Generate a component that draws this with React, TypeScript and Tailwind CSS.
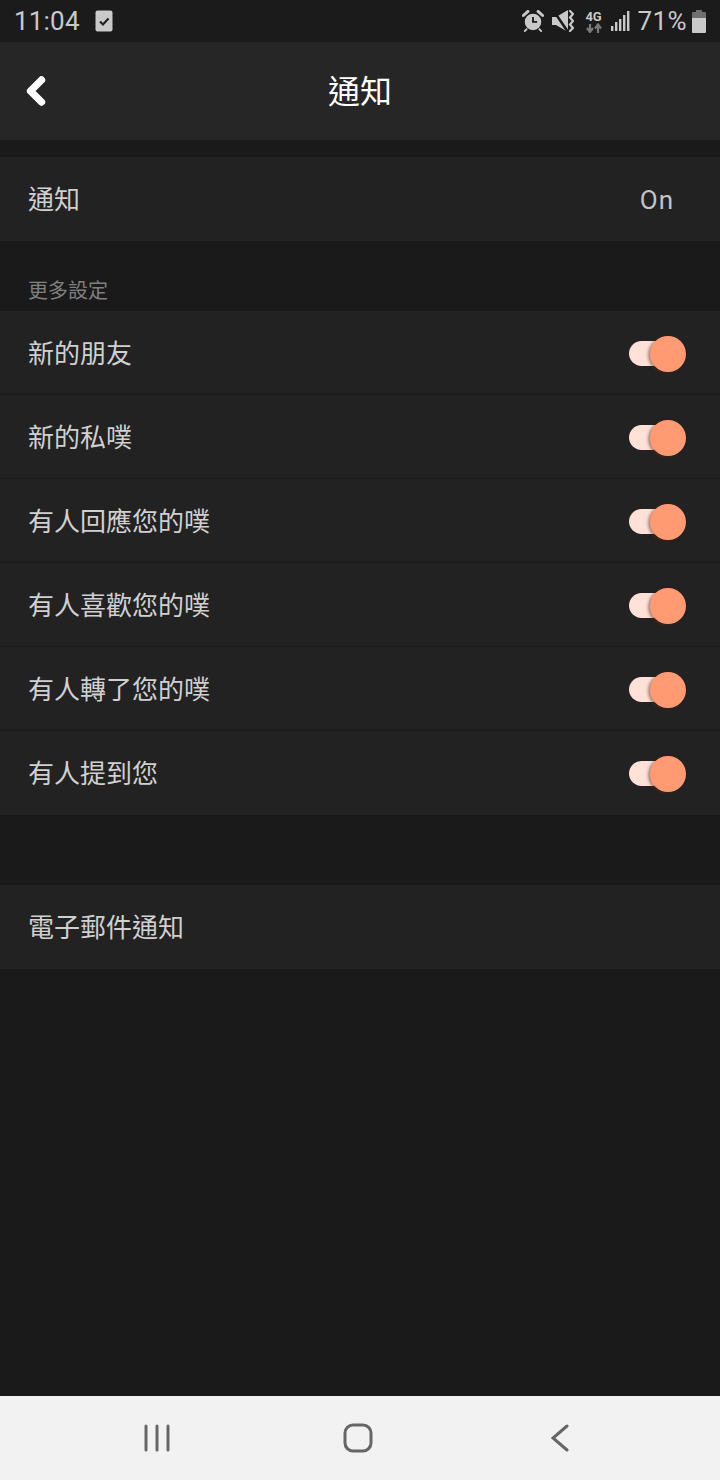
import { ChevronLeft } from 'lucide-react'

const cjk = "font-['Roboto','Noto_Sans_CJK_TC',sans-serif]"

const alerts = [
  '新的朋友',
  '新的私噗',
  '有人回應您的噗',
  '有人喜歡您的噗',
  '有人轉了您的噗',
  '有人提到您',
]

const StatusBar = () => (
  <div className="flex h-[42px] items-center bg-[#1b1b1b] pl-[14px] pr-[14px] text-[#c9c9c9]">
    <span className="text-[26px] leading-none tracking-[0.2px]">11:04</span>
    <svg width="18" height="22" viewBox="0 0 18 22" className="ml-[15px]">
      <rect x="0.5" y="0.5" width="17" height="21" rx="2" fill="#c9c9c9" />
      <path d="M5 11.5l3 3 5.5-6" fill="none" stroke="#222" strokeWidth="2.2" />
    </svg>
    <div className="flex-1" />
    {/* alarm */}
    <svg width="22" height="22" viewBox="0 0 24 24" className="mr-[8px]">
      <circle cx="12" cy="13" r="9" fill="#c9c9c9" />
      <path d="M12 7.5V13h4.5" fill="none" stroke="#1b1b1b" strokeWidth="2" />
      <path d="M1.500 6l5-4.500M22.500 6l-5-4.500" stroke="#c9c9c9" strokeWidth="3.200" strokeLinecap="round" />
      <path d="M5 21l-2 2M19 21l2 2" stroke="#c9c9c9" strokeWidth="2" strokeLinecap="round" />
    </svg>
    {/* muted, vibrate */}
    <svg width="22" height="22" viewBox="0 0 22 22" className="mr-[12px]">
      <path d="M0 7h4l12-7v22L4 15H0z" fill="#c9c9c9" />
      <path d="M1 0l15 22" stroke="#1b1b1b" strokeWidth="2.600" />
      <path
        d="M18 1l3 3-3 3.500 3 3.500-3 3.500 3 3.500-3 3"
        fill="none"
        stroke="#c9c9c9"
        strokeWidth="2.200"
        strokeLinecap="round"
      />
    </svg>
    {/* network type */}
    <div className="mr-[9px] flex w-[16px] flex-col items-center">
      <span className="text-[13px] font-bold leading-[13px]">4G</span>
      <svg width="16" height="10" viewBox="0 0 16 10">
        <path d="M4 10V3M1 6l3-4 3 4" fill="none" stroke="#7a7a7a" strokeWidth="2.200" transform="rotate(180 4 5.500)" />
        <path d="M12 10V2M9 5.500l3-4 3 4" fill="none" stroke="#7a7a7a" strokeWidth="2.200" />
      </svg>
    </div>
    {/* signal */}
    <svg width="19" height="20" viewBox="0 0 19 20" className="mr-[8px]">
      <rect x="0" y="15" width="2.400" height="5" fill="#c9c9c9" />
      <rect x="4" y="11" width="2.400" height="9" fill="#c9c9c9" />
      <rect x="8" y="8" width="2.400" height="12" fill="#c9c9c9" />
      <rect x="12" y="4" width="2.400" height="16" fill="#c9c9c9" />
      <rect x="16" y="0" width="2.400" height="20" fill="#c9c9c9" />
    </svg>
    <span className="text-[26px] leading-none tracking-[0.4px]">71%</span>
    {/* battery */}
    <svg width="14" height="23" viewBox="0 0 14 23" className="ml-[5px]">
      <path d="M4 0h6v2h3a1 1 0 0 1 1 1v5H0V3a1 1 0 0 1 1-1h3z" fill="#6f6f6f" />
      <path d="M0 8h14v14a1 1 0 0 1-1 1H1a1 1 0 0 1-1-1z" fill="#c9c9c9" />
    </svg>
  </div>
)

const Toggle = () => (
  <div className="flex items-center">
    <div className="h-[25px] w-[49px] rounded-full bg-[#ffe1d8]" />
    <div className="-ml-[28px] h-[36px] w-[36px] rounded-full bg-[#ff9a73] shadow-[-2px_1px_3px_rgba(90,40,20,0.5)]" />
  </div>
)

const Row = ({ label, children }: { label: string; children?: React.ReactNode }) => (
  <div className="flex h-[84px] items-center justify-between border-b border-[#1c1c1c] bg-[#222222] pl-[28px] pr-[34px] pt-[2px] text-[26px] text-[#d0d0d0] last:border-b-0 last:pb-[1px]">
    <span className="pt-[2px]">{label}</span>
    {children}
  </div>
)

export default function App() {
  return (
    <div className={`flex h-[1480px] w-[720px] flex-col bg-[#1a1a1a] ${cjk}`}>
      <StatusBar />
      <div className="relative flex h-[98px] items-center justify-center bg-[#262626] pt-[2px]">
        <ChevronLeft
          size={44}
          strokeWidth={4}
          color="#ffffff"
          className="absolute left-[14px] top-[27px]"
        />
        <span className="text-[32px] text-white">通知</span>
      </div>
      <div className="mt-[17px]">
        <Row label="通知">
          <span className="mr-[12px] pt-[2px] tracking-[1px] text-[#c4c4c4]">On</span>
        </Row>
      </div>
      <div className="flex h-[70px] items-end pb-[6px] pl-[28px] text-[20px] leading-[28px] text-[#808080]">
        更多設定
      </div>
      <div>
        {alerts.map((label) => (
          <Row key={label} label={label}>
            <Toggle />
          </Row>
        ))}
      </div>
      <div className="mt-[70px]">
        <Row label="電子郵件通知" />
      </div>
      <div className="flex-1" />
      <div className="flex h-[84px] items-center bg-[#f2f2f2] px-[56px] pb-[1px]">
        <div className="flex w-[201.5px] justify-center">
          <svg width="26" height="28" viewBox="0 0 26 28">
            <path d="M2 2v24M13 2v24M24 2v24" stroke="#666666" strokeWidth="3" strokeLinecap="round" />
          </svg>
        </div>
        <div className="flex w-[201.5px] justify-center">
          <svg width="30" height="30" viewBox="0 0 30 30">
            <rect x="2" y="2" width="26" height="26" rx="8" fill="none" stroke="#666666" strokeWidth="3" />
          </svg>
        </div>
        <div className="flex w-[201.5px] justify-center">
          <svg width="18" height="28" viewBox="0 0 18 28">
            <path d="M16 2L2 14l14 12" fill="none" stroke="#666666" strokeWidth="3" strokeLinecap="round" />
          </svg>
        </div>
      </div>
    </div>
  )
}
